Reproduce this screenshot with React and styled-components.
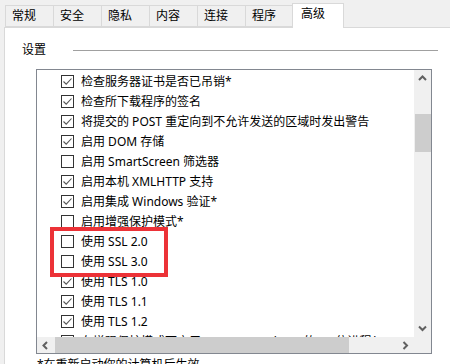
import styled, { createGlobalStyle } from 'styled-components';

const GlobalStyle = createGlobalStyle`
  html, body {
    margin: 0;
    padding: 0;
    height: 364px;
    overflow: hidden;
    background: #f0f0f0;
    font-family: "Noto Sans", "Noto Sans CJK SC", sans-serif;
    font-size: 12px;
    color: #000;
  }
`;

const tabs = ['常规', '安全', '隐私', '内容', '连接', '程序', '高级'];

const rows = [
  { label: '检查服务器证书是否已吊销*', checked: true },
  { label: '检查所下载程序的签名', checked: true },
  { label: '将提交的 POST 重定向到不允许发送的区域时发出警告', checked: true },
  { label: '启用 DOM 存储', checked: true },
  { label: '启用 SmartScreen 筛选器', checked: false },
  { label: '启用本机 XMLHTTP 支持', checked: true },
  { label: '启用集成 Windows 验证*', checked: true },
  { label: '启用增强保护模式*', checked: false },
  { label: '使用 SSL 2.0', checked: false },
  { label: '使用 SSL 3.0', checked: false },
  { label: '使用 TLS 1.0', checked: true },
  { label: '使用 TLS 1.1', checked: true },
  { label: '使用 TLS 1.2', checked: true },
  { label: '在增强保护模式下启用 Internet Explorer 的 64 位进程*', checked: false },
];

function CheckBox({ checked }) {
  return (
    <StCheck>
      {checked ? (
        <svg width="11" height="11" viewBox="0 0 11 11">
          <polyline
            points="1.5,5.5 4.2,8.2 9.5,2.5"
            fill="none"
            stroke="#555"
            strokeWidth="1.1"
          />
        </svg>
      ) : null}
    </StCheck>
  );
}

function Chevron({ dir }) {
  const pts = {
    up: '1,5 4.5,1.5 8,5',
    down: '1,1.5 4.5,5 8,1.5',
    left: '5,1 1.5,4.5 5,8',
    right: '1.5,1 5,4.5 1.5,8',
  }[dir];
  const vertical = dir === 'up' || dir === 'down';
  return (
    <svg
      width={vertical ? 9 : 7}
      height={vertical ? 7 : 9}
      viewBox={vertical ? '0 0 9 7' : '0 0 7 9'}
    >
      <polyline points={pts} fill="none" stroke="#606060" strokeWidth="2" />
    </svg>
  );
}

export default function App() {
  return (
    <>
      <GlobalStyle />
      <StTabRow>
        {tabs.map((t) => (
          <StTab key={t} active={t === '高级'}>
            {t}
          </StTab>
        ))}
      </StTabRow>
      <StPanel>
        <StGroupHeader>
          <StGroupLabel>设置</StGroupLabel>
          <StGroupLine />
        </StGroupHeader>
        <StListBox>
          <StViewport>
            {rows.map((r) => (
              <StRow key={r.label}>
                <CheckBox checked={r.checked} />
                <span>{r.label}</span>
              </StRow>
            ))}
            <StHighlight />
          </StViewport>
          <StVScroll>
            <StArrowBox>
              <Chevron dir="up" />
            </StArrowBox>
            <StVTrack>
              <StVThumb />
            </StVTrack>
            <StArrowBox>
              <Chevron dir="down" />
            </StArrowBox>
          </StVScroll>
          <StHScroll>
            <StArrowBox>
              <Chevron dir="left" />
            </StArrowBox>
            <StHThumb />
            <StArrowBox>
              <Chevron dir="right" />
            </StArrowBox>
          </StHScroll>
          <StCorner />
        </StListBox>
        <StNote>*在重新启动你的计算机后生效</StNote>
      </StPanel>
    </>
  );
}

const StTabRow = styled.div`
  display: flex;
  align-items: flex-end;
  height: 27px;
  padding-left: 5px;
  box-sizing: border-box;
`;

const StTab = styled.div`
  position: relative;
  box-sizing: border-box;
  width: ${(p) => (p.active ? '52px' : '49px')};
  height: ${(p) => (p.active ? '25px' : '22px')};
  margin-right: -1px;
  margin-left: ${(p) => (p.active ? '-1px' : '0')};
  margin-bottom: ${(p) => (p.active ? '-1px' : '0')};
  padding: ${(p) => (p.active ? '3px 0 0 8px' : '3px 0 0 6px')};
  border: 1px solid #d9d9d9;
  border-bottom: ${(p) => (p.active ? 'none' : '1px solid #d9d9d9')};
  background: ${(p) => (p.active ? '#ffffff' : '#f0f0f0')};
  z-index: ${(p) => (p.active ? 2 : 1)};
  line-height: 14px;
`;

const StPanel = styled.div`
  margin-left: 4px;
  margin-top: 0;
  width: 460px;
  height: 400px;
  box-sizing: border-box;
  border: 1px solid #d9d9d9;
  background: #ffffff;
  padding: 14px 0 0 17px;
`;

const StGroupHeader = styled.div`
  display: flex;
  align-items: center;
  height: 16px;
  width: 416px;
  gap: 27px;
`;

const StGroupLabel = styled.div`
  line-height: 16px;
`;

const StGroupLine = styled.div`
  flex: 1;
  height: 1px;
  background: #a0a0a0;
`;

const StListBox = styled.div`
  margin-top: 11px;
  margin-left: 14px;
  width: 396px;
  height: 285px;
  box-sizing: border-box;
  border: 1px solid #828790;
  display: grid;
  grid-template-columns: 1fr 17px;
  grid-template-rows: 1fr 16px;
`;

const StViewport = styled.div`
  position: relative;
  overflow: hidden;
  padding: 1px 0 0 24px;
`;

const StRow = styled.div`
  display: flex;
  align-items: center;
  gap: 7px;
  height: 20px;
  white-space: nowrap;
`;

const StCheck = styled.div`
  flex: none;
  box-sizing: border-box;
  width: 13px;
  height: 13px;
  border: 1px solid #333333;
  display: flex;
  align-items: center;
  justify-content: center;
  background: #ffffff;
`;

const StHighlight = styled.div`
  position: absolute;
  left: 13px;
  top: 157px;
  width: 118px;
  height: 50px;
  box-sizing: border-box;
  border: 4px solid #ec3237;
`;

const StVScroll = styled.div`
  display: flex;
  flex-direction: column;
  background: #f0f0f0;
`;

const StArrowBox = styled.div`
  flex: none;
  width: 17px;
  height: 17px;
  display: flex;
  align-items: center;
  justify-content: center;
`;

const StVTrack = styled.div`
  flex: 1;
  padding-top: 27px;
`;

const StVThumb = styled.div`
  margin: 0 auto;
  width: 16px;
  height: 38px;
  background: #cdcdcd;
`;

const StHScroll = styled.div`
  display: flex;
  align-items: stretch;
  background: #f0f0f0;
`;

const StHThumb = styled.div`
  width: 294px;
  margin-left: 1px;
  background: #cdcdcd;
  margin-right: auto;
`;

const StCorner = styled.div`
  background: #f0f0f0;
`;

const StNote = styled.div`
  margin-top: 3px;
  margin-left: 15px;
  line-height: 16px;
`;
